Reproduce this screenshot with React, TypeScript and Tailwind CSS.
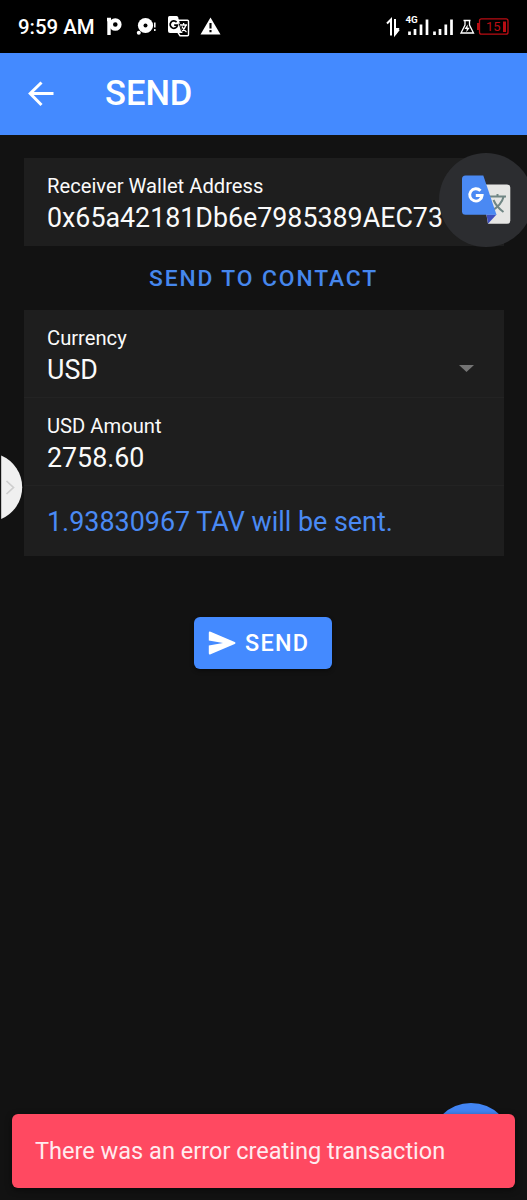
import type { ReactNode } from "react";

function StatusBar() {
  return (
    <div className="flex h-[53px] shrink-0 items-center bg-black pl-[18px] pr-[17px] text-white">
      <span className="w-[78px] shrink-0 whitespace-nowrap pt-0.5 text-[20.4px] font-medium leading-[53px]">9:59 AM</span>
      <svg className="ml-[11px] h-5 w-[15px] shrink-0" viewBox="0 0 15 20" fill="none" stroke="white">
        <path d="M2 1V18M0 2.5H4" strokeWidth="3.4" />
        <circle cx="8.3" cy="7.5" r="4.3" strokeWidth="4" />
      </svg>
      <svg className="ml-[14px] h-5 w-5 shrink-0" viewBox="0 0 20 20">
        <circle cx="9.5" cy="8.5" r="7.6" fill="white" />
        <circle cx="9.5" cy="8.5" r="2" fill="black" />
        <circle cx="2.8" cy="15.8" r="2" fill="white" />
        <path d="M18.8 5.5v5M18.8 12v2" stroke="white" strokeWidth="1.5" />
      </svg>
      <svg className="ml-[12px] h-[21px] w-[22px] shrink-0" viewBox="0 0 22 21">
        <path d="M9 4.2h10.500q1 0 1 1v13.500q0 1-1 1H12l-2-3" stroke="white" strokeWidth="1.400" fill="none" />
        <path d="M1.500 0h7q1.200 0 1.600 1.200L14.500 17H2Q0 17 0 15V1.500Q0 0 1.500 0Z" fill="white" />
        <path d="M8.600 6.100A3.700 3.700 0 1 0 9.500 9.200H6.200" stroke="black" strokeWidth="1.700" fill="none" />
        <path d="M12 9h7M15.600 7v2M18 9q-1 4-5 7M14 10.500q1.500 3.500 4.500 5.500" stroke="white" strokeWidth="1.300" fill="none" />
        <path d="M11.200 7.500l2.400 8" stroke="black" strokeWidth="1" />
      </svg>
      <svg className="ml-[10px] h-[18px] w-[21px] shrink-0 -translate-y-px" viewBox="0 0 21 18">
        <path d="M10.500 .5L20.500 17.500H.5Z" fill="white" />
        <path d="M10.500 6v5.500M10.500 13v2.200" stroke="black" strokeWidth="2.100" />
      </svg>
      <div className="flex-1" />
      <svg className="h-[24px] w-[124px] shrink-0" viewBox="386 15 124 24">
        <path d="M387 23.500l4-4V35.500M395 19v15.500l4-5" stroke="white" strokeWidth="2" fill="none" />
        <path d="M396 34.500V28h3.500Z" fill="white" />
        <path d="M409.500 31.500v3.600M415 29v6.100M421 24.500v10.600M427 19.500v15.600M434.500 31.500v3.600M440 29v6.100M445.800 24.500v10.600M451.500 19.500v15.600" stroke="white" strokeWidth="2.700" />
        <text x="405.500" y="23" fill="white" fontSize="9.800" fontWeight="700" fontFamily="Roboto, sans-serif">4G</text>
        <path d="M463.500 20.500h7M465 20.500v4.500l-4 8h12.500l-4-8v-4.500" stroke="white" strokeWidth="1.300" fill="none" />
        <path d="M467.800 24.500l-3.300 4.500h2.300l-.5 3.300 3.500-4.500h-2.300Z" fill="white" />
        <rect x="479.500" y="18.800" width="28.500" height="15.400" rx="2" stroke="#b90d13" strokeWidth="1.300" fill="none" />
        <path d="M478 23v7" stroke="#b90d13" strokeWidth="2" />
        <path d="M504.500 21.500v10.500" stroke="#b90d13" strokeWidth="3" />
        <text x="486" y="31.300" fill="#b90d13" fontSize="13" fontFamily="Roboto, sans-serif">15</text>
      </svg>
    </div>
  );
}

function Header() {
  return (
    <header className="flex h-[82px] shrink-0 items-center bg-[#448aff] text-white">
      <svg className="ml-[28px] h-[26px] w-[26px]" viewBox="0 0 26 26" fill="none" stroke="white" strokeWidth="3">
        <path d="M25.500 12.500H2.500M13.500 1.500L2.200 12.500L13.500 24" />
      </svg>
      <h1 className="ml-[51px] text-[34.5px] font-medium leading-[80px] -translate-y-px">SEND</h1>
    </header>
  );
}

function Field({ label, last = false, children }: { label: string; last?: boolean; children: ReactNode }) {
  return (
    <div className={`flex h-[88px] flex-col border-b px-[23.5px] pt-[15px] ${last ? "border-[#1e1e1e]" : "border-[#232323]"}`}>
      <span className="whitespace-nowrap text-[20.2px] leading-[26px]">{label}</span>
      <div className="flex h-[37px] items-center justify-between whitespace-nowrap text-[26.8px] leading-[38px]">{children}</div>
    </div>
  );
}

function TranslateBubble() {
  return (
    <div className="absolute left-[439px] top-[153px] h-[94px] w-[94px] rounded-full bg-[#2c2d30]">
      <svg className="h-[94px] w-[94px]" viewBox="0 0 94 94">
        <path d="M42 31.500H68q3.300 0 3.300 3.300V67.500q0 3.300-3.300 3.300H49Z" fill="#e6e6e4" />
        <path d="M50 43.500H67M58.500 41v3M64.500 44q-2 8-12 14M54.500 47q3 7 10 12" stroke="#708684" strokeWidth="2" fill="none" />
        <path d="M47.500 61.500H57.500L49 70.800Z" fill="#3d4ebd" />
        <path d="M26.500 22.500H44.300L57.500 61.800H26.500q-3.500 0-3.500-3.500V26q0-3.500 3.500-3.500Z" fill="#4a89f3" />
        <path d="M41.500 37.700A6.200 6.200 0 1 0 43.100 42.500H36.800" stroke="white" strokeWidth="2.900" fill="none" />
      </svg>
    </div>
  );
}

export default function App() {
  return (
    <div className="relative flex h-[1200px] w-[527px] flex-col overflow-hidden bg-[#121212] font-['Roboto',sans-serif] text-[#fafafa]">
      <StatusBar />
      <Header />
      <main className="flex flex-1 flex-col px-[23.5px] pt-[23px]">
        <section className="w-[480px] bg-[#1e1e1e]">
          <Field label="Receiver Wallet Address" last>0x65a42181Db6e7985389AEC73</Field>
        </section>
        <button className="h-16 w-[480px] whitespace-nowrap text-[22.8px] font-medium leading-[66px] tracking-[1.9px] text-[#4687ed]">
          SEND TO CONTACT
        </button>
        <section className="w-[480px] bg-[#1e1e1e]">
          <Field label="Currency">
            USD
            <svg className="mr-[6px] h-[7px] w-[15px] -translate-y-px" viewBox="0 0 15 7">
              <path d="M0 0H15L7.500 7Z" fill="#747474" />
            </svg>
          </Field>
          <Field label="USD Amount">2758.60</Field>
          <p className="h-[70px] whitespace-nowrap pl-[23.5px] text-[26.9px] leading-[72px] text-[#4a8af4]">
            1.93830967 TAV will be sent.
          </p>
        </section>
        <button className="ml-[170.5px] mt-[61px] flex h-[52px] w-[138px] items-center rounded-[6px] bg-[#448aff] pl-[14px] text-white shadow-[0_2px_4px_rgba(0,0,0,0.4)]">
          <svg className="h-6 w-7" viewBox="0 0 28 24">
            <path d="M.8 1.800Q.8 0 2.600.7L26.700 11q1.600 1 0 2L2.600 23.300Q.8 24 .8 22.200V14.500L15 12L.8 9.500Z" fill="white" />
          </svg>
          <span className="ml-[9px] text-[23.4px] font-medium leading-[52px] tracking-[1.3px]">SEND</span>
        </button>
      </main>
      <TranslateBubble />
      <svg className="absolute left-0 top-[454px] h-[67px] w-[23px]" viewBox="0 0 23 67">
        <path d="M1.200 1.500A34.500 34.500 0 0 1 1.200 65Z" fill="#f0f0f0" />
        <path d="M6.500 27L13.500 33.500L6.500 40" stroke="#cecece" strokeWidth="1.700" fill="none" />
      </svg>
      <div className="absolute left-[430px] top-[1103px] h-[82px] w-[82px] rounded-full bg-[#4285f4]" />
      <div className="absolute left-3 top-[1114px] flex h-[74px] w-[503px] items-center rounded-[6px] bg-[#ff4961] pl-[23px] pt-0.5 shadow-[0_2px_6px_rgba(0,0,0,0.5)]">
        <span className="whitespace-nowrap text-[23.55px] text-[#ffebef]">There was an error creating transaction</span>
      </div>
    </div>
  );
}
